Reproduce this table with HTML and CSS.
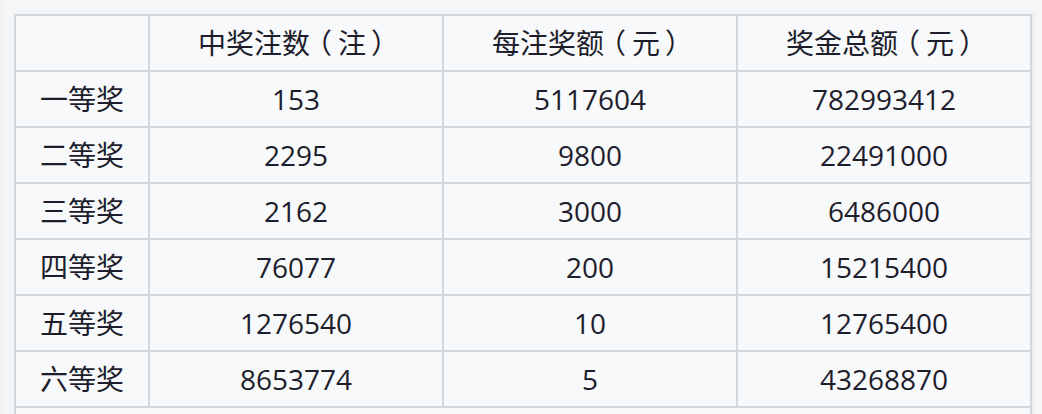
FILE: index.html
```html
<!DOCTYPE html>
<html lang="zh-CN">
<head>
<meta charset="utf-8">
<title>奖级表</title>
<link rel="stylesheet" href="styles.css">
</head>
<body>
<div class="page">
  <table class="prize-table">
    <colgroup>
      <col class="c-label">
      <col class="c-data">
      <col class="c-data">
      <col class="c-data">
    </colgroup>
    <thead>
      <tr>
        <th></th>
        <th>中奖注数<span class="lp">（</span>注<span class="rp">）</span></th>
        <th>每注奖额<span class="lp">（</span>元<span class="rp">）</span></th>
        <th>奖金总额<span class="lp">（</span>元<span class="rp">）</span></th>
      </tr>
    </thead>
    <tbody>
      <tr><td>一等奖</td><td>153</td><td>5117604</td><td>782993412</td></tr>
      <tr><td>二等奖</td><td>2295</td><td>9800</td><td>22491000</td></tr>
      <tr><td>三等奖</td><td>2162</td><td>3000</td><td>6486000</td></tr>
      <tr><td>四等奖</td><td>76077</td><td>200</td><td>15215400</td></tr>
      <tr><td>五等奖</td><td>1276540</td><td>10</td><td>12765400</td></tr>
      <tr><td>六等奖</td><td>8653774</td><td>5</td><td>43268870</td></tr>
      <tr class="cut"><td colspan="4"></td></tr>
    </tbody>
  </table>
</div>
</body>
</html>
```
FILE: styles.css
```css
html, body {
  margin: 0;
  padding: 0;
  background: #f5f6f7;
  height: 100%;
  overflow: hidden;
}

.page {
  padding: 14px 0 0 12px;
  border-left: 1px solid #eceef0;
  margin-left: 1px;
  height: 100%;
  box-sizing: border-box;
}

.prize-table {
  border-collapse: collapse;
  table-layout: fixed;
  width: 1016px;
  background: #f8f9fb;
  color: #1d1d2b;
  font-family: "Open Sans", "Noto Sans CJK SC", sans-serif;
  font-size: 28px;
  box-shadow: 3px 0 0 #eceef0;
}

.c-label { width: 134px; }
.c-data { width: 294px; }

.prize-table th,
.prize-table td {
  border: 2px solid #d3d6da;
  height: 54px;
  padding: 0;
  text-align: center;
  vertical-align: middle;
  font-weight: 400;
  line-height: 1;
  white-space: nowrap;
}

.prize-table .lp {
  font-feature-settings: "halt" 1;
  padding: 0 6px 0 8px;
}

.prize-table .rp {
  font-feature-settings: "halt" 1;
  padding: 0 9px 0 5px;
}

.prize-table tr.cut td {
  height: 20px;
}
```
